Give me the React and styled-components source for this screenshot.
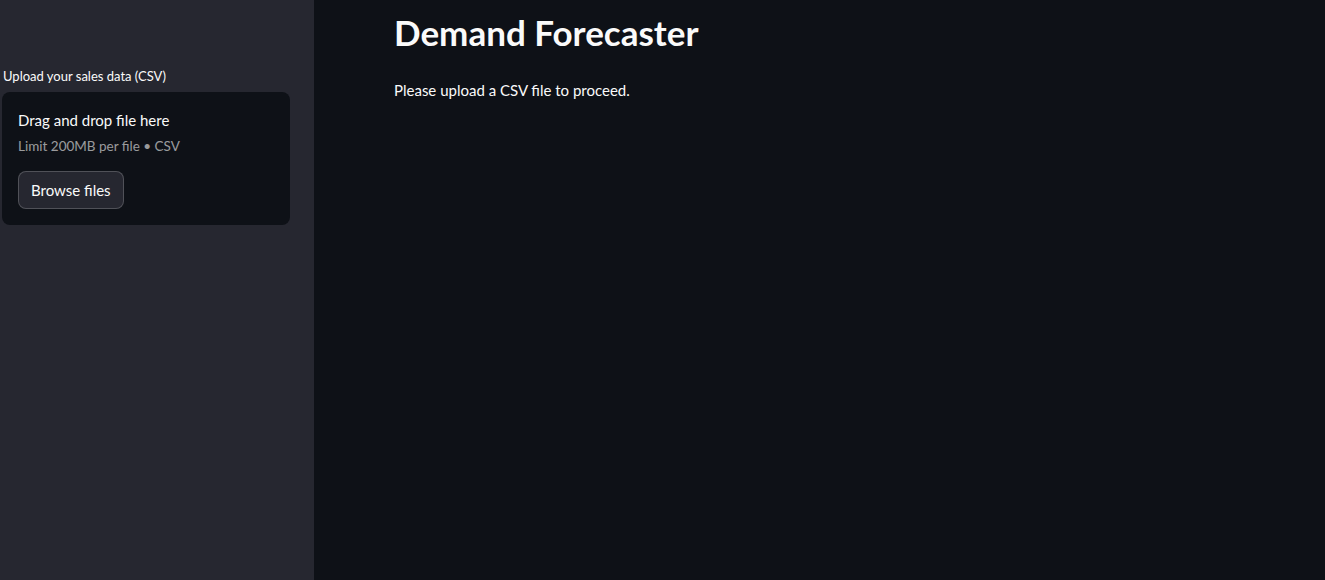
import styled, { createGlobalStyle } from "styled-components";

const Global = createGlobalStyle`
    html, body {
        margin: 0;
        padding: 0;
        background: #0e1117;
    }
    body {
        font-family: "Lato", "Noto Sans", sans-serif;
        color: #fafafa;
    }
`

const Layout = styled.div`
    display: flex;
    width: 1325px;
    height: 580px;
    overflow: hidden;
`

const Sidebar = styled.aside`
    width: 314px;
    flex-shrink: 0;
    background: #262730;
    padding: 68px 24px 0 2px;
    box-sizing: border-box;
`

const Label = styled.div`
    font-size: 13px;
    line-height: 16px;
    margin: 0 0 8px 1px;
    color: #fafafa;
`

const Dropzone = styled.section`
    background: #0e1117;
    border-radius: 8px;
    padding: 16px;
    display: flex;
    flex-direction: column;
    align-items: flex-start;
    height: 133px;
    box-sizing: border-box;
`

const DropTitle = styled.div`
    font-size: 15px;
    line-height: 24px;
`

const DropHint = styled.div`
    font-size: 13.5px;
    line-height: 20px;
    color: rgba(250, 250, 250, 0.6);
    margin-top: 4px;
`

const Button = styled.button`
    margin-top: 15px;
    height: 38px;
    padding: 0 12px;
    font-family: inherit;
    font-size: 15px;
    color: #fafafa;
    background: #262730;
    border: 1px solid rgba(250, 250, 250, 0.2);
    border-radius: 8px;
`

const Main = styled.main`
    flex: 1;
    padding: 10px 0 0 80px;
`

const Title = styled.h1`
    margin: 0;
    font-size: 35px;
    line-height: 44px;
    font-weight: 700;
`

const Text = styled.p`
    margin: 24px 0 0 0;
    font-size: 15px;
    line-height: 24px;
`

export default function App() {
    return (
        <Layout>
            <Global />
            <Sidebar>
                <Label>Upload your sales data (CSV)</Label>
                <Dropzone>
                    <DropTitle>Drag and drop file here</DropTitle>
                    <DropHint>Limit 200MB per file • CSV</DropHint>
                    <Button>Browse files</Button>
                </Dropzone>
            </Sidebar>
            <Main>
                <Title>Demand Forecaster</Title>
                <Text>Please upload a CSV file to proceed.</Text>
            </Main>
        </Layout>
    );
}
